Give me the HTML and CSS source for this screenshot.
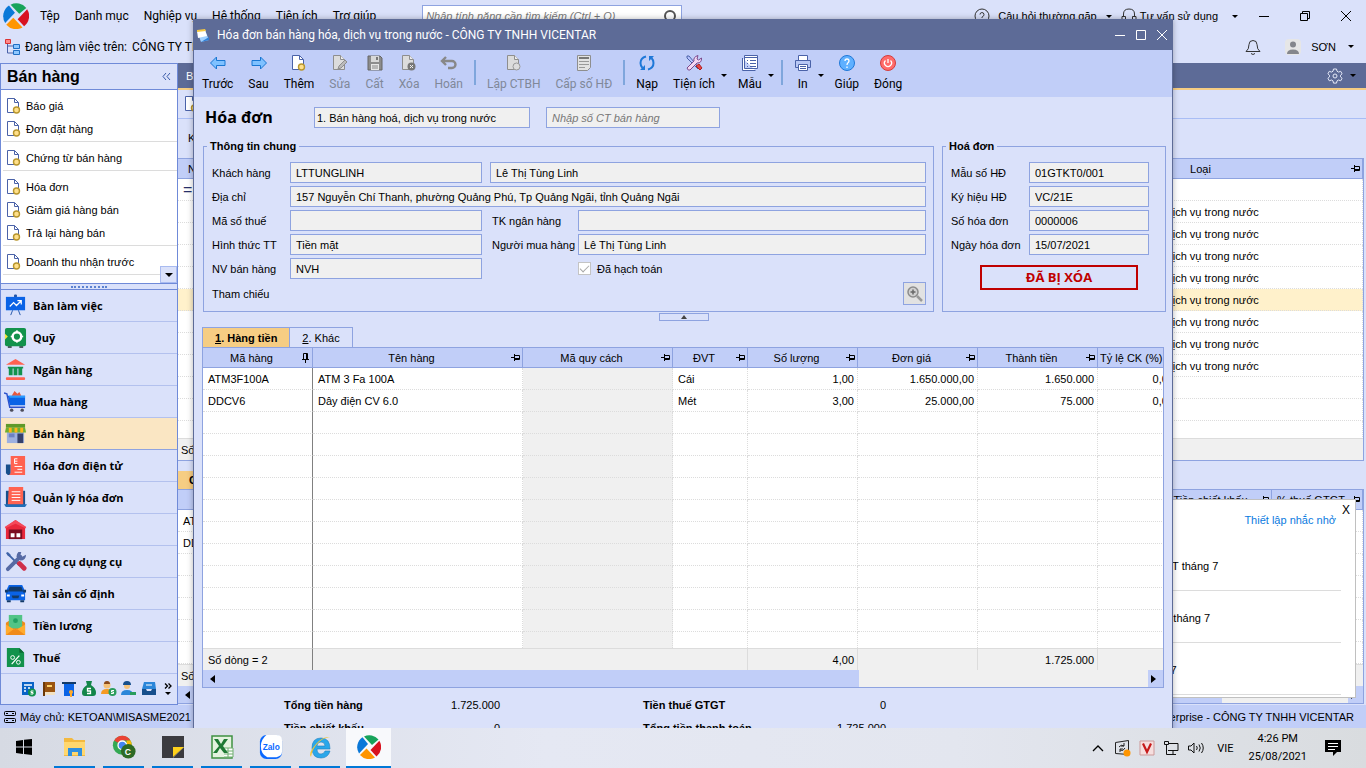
FILE: index.html
```
<!DOCTYPE html>
<html lang="vi">
<head>
    <meta charset="UTF-8">
    <meta name="viewport" content="width=device-width, initial-scale=1.0">
    <title>MISA SME - Bán hàng</title>
    <link rel="stylesheet" href="styles.css">
</head>
<body>

<!-- shared icons -->
<svg class="sprite" aria-hidden="true">
    <symbol id="i-doc" viewBox="0 0 16 18">
        <path d="M1.5 1.5h7l4 4v10h-11z" fill="#fff" stroke="#4a62a8"/>
        <path d="M8.500 1.500v4h4" fill="none" stroke="#4a62a8"/>
        <circle cx="10.500" cy="13" r="3" fill="#ffe08a" stroke="#b8962e" stroke-width="1.400"/>
    </symbol>
    <symbol id="i-doc-off" viewBox="0 0 16 18">
        <path d="M1.500 1.500h7l4 4v10h-11z" fill="#dcdcdc" stroke="#8e8e8e"/>
        <path d="M8.500 1.500v4h4" fill="#eee" stroke="#8e8e8e"/>
    </symbol>
    <symbol id="i-pin" viewBox="0 0 10 8">
        <path d="M0 4.500h3M3.500 1v7M3.500 2.500h5v4h-5M3.500 5.500h5" fill="none" stroke="#000"/>
    </symbol>
    <symbol id="i-pin-v" viewBox="0 0 8 10">
        <path d="M3.500 10V6M0 6.500h7M1.500 6V.5h4V6M4.500 1v5" fill="none" stroke="#000"/>
    </symbol>
    <symbol id="i-misa" viewBox="0 0 24 24">
        <path d="M7 1.500A12 12 0 0 1 21.500 4.500L15 10z" fill="#17a35b"/>
        <path d="M22.300 5.700A12 12 0 0 1 19.500 21.500L13.500 15z" fill="#d8121f"/>
        <path d="M18 22.500A12 12 0 0 1 3 20L9.500 13.500z" fill="#ff9500"/>
        <path d="M2 18.500A12 12 0 0 1 5.500 2.200L11 9z" fill="#0a78d8"/>
    </symbol>
    <symbol id="i-person" viewBox="0 0 16 16">
        <circle cx="6" cy="4" r="3.500" fill="#f5c27a"/><path d="M3 3a3 3 0 0 1 6 0z" fill="#8a4a1e"/>
        <path d="M0 13q0-5 6-5t6 5z" fill="#f59a23"/><circle cx="11.500" cy="11" r="4" fill="#2a9d5c"/>
        <path d="M13 9.500h-2.500v1.500h2v1.500h-2.500" fill="none" stroke="#fff"/>
    </symbol>
</svg>

<main class="app">
    <header class="titlebar">
        <svg class="logo" viewBox="0 0 24 24"><use href="#i-misa"/></svg>
        <nav class="menu">
            <a href="#">Tệp</a><a href="#">Danh mục</a><a href="#">Nghiệp vụ</a><a href="#">Hệ thống</a><a href="#">Tiện ích</a><a href="#">Trợ giúp</a>
        </nav>
        <div class="search">
            <input type="text" aria-label="Tìm kiếm" placeholder="Nhập tính năng cần tìm kiếm (Ctrl + Q)">
            <svg width="16" height="16" viewBox="0 0 16 16"><circle cx="8" cy="8" r="5" fill="none" stroke="#555" stroke-width="2"/><path d="M11 12l3 3" stroke="#555" stroke-width="2"/></svg>
        </div>
        <div class="help">
            <button type="button">
                <svg width="16" height="16" viewBox="0 0 16 16" fill="none" stroke="#333"><circle cx="8" cy="8" r="7"/><path d="M6 6.500a2 2 0 1 1 2.500 2q-.5.300-.5 1.500M8 11v1"/></svg>
                Câu hỏi thường gặp
            </button>
            <i class="caret"></i>
            <button type="button" class="support">
                <svg width="16" height="16" viewBox="0 0 16 16" fill="none" stroke="#333"><path d="M2.500 8V6q0-5 5.500-5t5.500 5v2M1 8.500h3.500v6H3a2 2 0 0 1-2-2zM11.500 8.500H15v4a2 2 0 0 1-2 2h-1.500z"/></svg>
                Tư vấn sử dụng
            </button>
            <i class="caret"></i>
        </div>
        <div class="winbtns">
            <button type="button" aria-label="Thu nhỏ"><svg width="12" height="12" viewBox="0 0 12 12"><path d="M1 6.500h10" stroke="#000"/></svg></button>
            <button type="button" aria-label="Khôi phục"><svg width="12" height="12" viewBox="0 0 12 12"><path d="M1.500 3.500h7v7h-7zM3.500 3V1.500h7v7H9" fill="none" stroke="#000"/></svg></button>
            <button type="button" aria-label="Đóng"><svg width="12" height="12" viewBox="0 0 12 12"><path d="M1 1l10 10M11 1L1 11" stroke="#000"/></svg></button>
        </div>
    </header>

    <div class="workbar">
        <svg width="18" height="18" viewBox="0 0 18 18"><path d="M3.500 4v11h6M3.500 8h6" fill="none" stroke="#4a62a8"/><path d="M1.500 1.500h5v4h-5z" fill="#ff8a8a" stroke="#d33"/><path d="M9.500 6.500h6v4h-6zM9.500 12.500h6v4h-6z" fill="#8fc8ff" stroke="#1f6fc4"/></svg>
        <span>Đang làm việc trên:</span>
        <span class="company">CÔNG TY TNHH VICENTAR</span>
        <div class="user">
            <svg class="bell" width="16" height="18" viewBox="0 0 16 18" fill="none" stroke="#333"><path d="M1 13.500q3-2 3-7a4 4 0 0 1 8 0q0 5 3 7zM6 15.500q2 2 4 0"/></svg>
            <svg class="avatar" width="16" height="16" viewBox="0 0 16 16"><rect width="16" height="16" rx="4" fill="#e6e6e6"/><circle cx="8" cy="5.500" r="3" fill="#84868c"/><path d="M2 15q0-4.500 6-4.500T14 15z" fill="#84868c"/></svg>
            <span>SƠN</span>
            <i class="caret"></i>
        </div>
    </div>

    <div class="workspace">
        <aside class="sidebar">
            <div class="side-head"><h2>Bán hàng</h2><button type="button" aria-label="Thu gọn"><svg width="9" height="9" viewBox="0 0 9 9"><path d="M4 1L1 4.500 4 8M8 1L5 4.500 8 8" fill="none" stroke="#3a5aa8"/></svg></button></div>
            <div class="side-list">
                <ul>
                    <li><svg><use href="#i-doc"/></svg><a href="#">Báo giá</a></li>
                    <li><svg><use href="#i-doc"/></svg><a href="#">Đơn đặt hàng</a></li>
                </ul>
                <ul>
                    <li><svg><use href="#i-doc"/></svg><a href="#">Chứng từ bán hàng</a></li>
                </ul>
                <ul>
                    <li><svg><use href="#i-doc"/></svg><a href="#">Hóa đơn</a></li>
                    <li><svg><use href="#i-doc"/></svg><a href="#">Giảm giá hàng bán</a></li>
                    <li><svg><use href="#i-doc"/></svg><a href="#">Trả lại hàng bán</a></li>
                </ul>
                <ul>
                    <li><svg><use href="#i-doc"/></svg><a href="#">Doanh thu nhận trước</a></li>
                </ul>
                <button type="button" class="scroll-down" aria-label="Cuộn xuống"><i class="caret"></i></button>
            </div>
            <div class="grip"></div>
            <nav class="modules">
                <a href="#"><svg viewBox="0 0 24 24"><path d="M11 1h2v3h-2zM9 17l-2 5M15 17l2 5" stroke="#2456a8" fill="#2456a8"/><rect x="2" y="3" width="20" height="14" fill="#0a63e6"/><path d="M6 13l4-4 3 3 5-5M14 7h4v4" fill="none" stroke="#fff" stroke-width="1.300"/></svg>Bàn làm việc</a>
                <a href="#"><svg viewBox="0 0 24 24"><path d="M4 20h4v3H4zM16 20h4v3h-4z" fill="#4b5a60"/><rect x="1" y="2" width="22" height="19" rx="2" fill="#12924c"/><circle cx="13.500" cy="11" r="4.500" fill="none" stroke="#fff" stroke-width="2.500"/><path d="M13.500 4.500v3M13.500 14.500v3M7 11h3M17 11h3" stroke="#fff" stroke-width="1.500"/><path d="M1 8l3 3-3 3z" fill="#f7e63c"/></svg>Quỹ</a>
                <a href="#"><svg viewBox="0 0 24 24"><path d="M12 1l10 6H2z" fill="#ff6250"/><path d="M4 9h16v2H4zM5 11h4v7H5zM10 11h4v7h-4zM15 11h4v7h-4z" fill="#12924c"/><rect x="2" y="20" width="20" height="3" rx="1" fill="#ff6250"/></svg>Ngân hàng</a>
                <a href="#"><svg viewBox="0 0 24 24"><path d="M8 6l3-5 3 3 2-2 2 4z" fill="#e8583e"/><path d="M4 6h18v10H6z" fill="#0a63e6"/><path d="M5 6h17v2H6z" fill="#2b9bff"/><path d="M0 3l3 1 3 14h16" fill="none" stroke="#2c52cc" stroke-width="1.500"/><circle cx="8" cy="21" r="1.800" fill="#4d4d5c"/><circle cx="19" cy="21" r="1.800" fill="#4d4d5c"/></svg>Mua hàng</a>
                <a href="#" class="active"><svg viewBox="0 0 24 24"><path d="M3 10h18v12H3z" fill="#9db0e0"/><path d="M14 12h6v10h-6z" fill="#34406b"/><path d="M5 12h6v4H5z" fill="#6c81c4"/><path d="M2 2h20v4H2z" fill="#5e9a2a"/><path d="M2 6h20l1 5H1z" fill="#6fae2f"/><path d="M5 6h3v5H5zM11 6h3v5h-3zM17 6h3v5h-3z" fill="#ffb31a"/></svg>Bán hàng</a>
                <a href="#"><svg viewBox="0 0 24 24"><path d="M2 11h5v11H4l-2-2z" fill="#174f8c"/><path d="M7 2h15v20H5q2-1 2-3z" fill="#ff6250"/><path d="M14 5h-3v5h3M11 7.500h3M11 13h8M14 16h5M11 19h8" fill="none" stroke="#fff"/></svg>Hóa đơn điện tử</a>
                <a href="#"><svg viewBox="0 0 24 24"><path d="M2 5h20v15H2z" fill="#174f8c"/><path d="M0 19h24l-2 3H2z" fill="#1f6db8"/><path d="M5 1h15v18H4z" fill="#ff6250"/><path d="M8 6h9M8 9h9M8 12h9M8 15h9" stroke="#fff"/></svg>Quản lý hóa đơn</a>
                <a href="#"><svg viewBox="0 0 24 24"><path d="M12 2l10 7v13H2V9z" fill="#e8283c"/><path d="M5 12h14v10H5z" fill="#7a0d20"/><path d="M7 16h4v4H7zM13 16h4v4h-4z" fill="#fff"/><path d="M1 9l11-7 11 7v2L12 6 1 11z" fill="#f4495a"/></svg>Kho</a>
                <a href="#"><svg viewBox="0 0 24 24"><path d="M4 4l12 12" stroke="#3e63a8" stroke-width="2"/><path d="M2 3l2-1 3 3-1 2-2-1z" fill="#3e63a8"/><path d="M16 14l5 5" stroke="#cf2f4a" stroke-width="5" stroke-linecap="round"/><path d="M4 20L17 7" stroke="#566aa5" stroke-width="4" stroke-linecap="round"/><path d="M15 2l3 0-1 4 2 1 4-2q0 6-6 6l-4-4q0-3 2-5z" fill="#566aa5"/></svg>Công cụ dụng cụ</a>
                <a href="#"><svg viewBox="0 0 24 24"><path d="M5 3h14l3 7v9H2v-9z" fill="#0a63e6"/><path d="M6 5h12l2 5H4z" fill="#123a68"/><path d="M1 8h3v3H1zM20 8h3v3h-3zM3 19h4v2H3zM17 19h4v2h-4z" fill="#123a68"/><path d="M8 14h8l-1 3H9z" fill="#123a68"/><path d="M3 13h3v2H3zM18 13h3v2h-3z" fill="#fff"/></svg>Tài sản cố định</a>
                <a href="#"><svg viewBox="0 0 24 24"><path d="M2 9l5-3h10l5 3v13H2z" fill="#f08a1a"/><path d="M5 1h14v14H5z" fill="#52c486"/><circle cx="12" cy="7" r="2.500" fill="#23a062"/><path d="M2 11l10 6 10-6v11H2z" fill="#ffab2e"/><path d="M2 22l8-6 2 1 2-1 8 6z" fill="#f08a1a"/></svg>Tiền lương</a>
                <a href="#"><svg viewBox="0 0 24 24"><path d="M3 2h13l5 5v15H3z" fill="#12924c"/><path d="M16 2l5 5h-5z" fill="#0a6a35"/><path d="M16 10l-8 9" stroke="#fff" stroke-width="1.300"/><circle cx="9" cy="12" r="2" fill="none" stroke="#fff"/><circle cx="15" cy="17" r="2" fill="none" stroke="#fff"/></svg>Thuế</a>
            </nav>
            <div class="shortcuts">
                <svg viewBox="0 0 16 16"><rect x="1" y="1" width="12" height="13" fill="#0a63c6"/><path d="M3 4h8M3 7h2M7 7h2M3 10h2" stroke="#fff" stroke-width="1.500"/><circle cx="11" cy="11.500" r="4" fill="#12924c"/><path d="M12.500 10H10v1.500h2V13H9.500" fill="none" stroke="#fff"/></svg>
                <svg viewBox="0 0 16 16"><path d="M3 1h11v13H3z" fill="#9a5412"/><path d="M3 11h11v3H3z" fill="#f3e2c4"/><path d="M6 4h5v2H6z" fill="#ffd36b"/><path d="M2 1h2v14H2z" fill="#6d3908"/></svg>
                <svg viewBox="0 0 16 16"><path d="M3 3h10v12H3z" fill="#0a63e6"/><path d="M1 1h14v2H1z" fill="#123a68"/><circle cx="10" cy="11" r="2" fill="#ffab2e"/><path d="M9 12h2v4H9z" fill="#ffab2e"/></svg>
                <svg viewBox="0 0 16 16"><path d="M5 0h6L10 4q5 3 5 8 0 3-3 3H4q-3 0-3-3 0-5 5-8z" fill="#12854a"/><path d="M10 7.500H6.500V10h3v2.500H6" fill="none" stroke="#fff" stroke-width="1.300"/></svg>
                <svg viewBox="0 0 16 16"><use href="#i-person"/></svg>
                <svg viewBox="0 0 16 16"><circle cx="6" cy="5" r="3" fill="#f5c27a"/><path d="M2 4q0-4 4-4t4 4z" fill="#174f8c"/><path d="M0 14q0-5 6-5t6 5z" fill="#2b86d9"/><path d="M9 11h6v3H9z" fill="#2a9d5c"/></svg>
                <svg viewBox="0 0 16 16"><path d="M3 1h11l1 7H1z" fill="#2b86d9"/><path d="M1 8h4l1 2h4l1-2h4v6H1z" fill="#174f8c"/><path d="M5 4h6" stroke="#fff"/></svg>
                <button type="button" class="more" aria-label="Thêm"><svg viewBox="0 0 8 6"><path d="M1 .5l2.500 2.500L1 5.500M4.500.5L7 3 4.500 5.500" fill="none" stroke="#000" stroke-width="1.300"/></svg><i class="caret"></i></button>
            </div>
        </aside>

        <section class="content">
            <div class="tabbar">
                <span>Bán hàng</span>
                <div class="gear">
                    <svg width="16" height="16" viewBox="0 0 16 16" fill="none" stroke="#e6eaf8"><path d="M6.500 1h3l.5 2.200 1.500.9 2.200-.8 1.400 2.500L13.500 7.300v1.500l1.600 1.500-1.400 2.500-2.200-.8-1.500.9-.5 2.200h-3L6 12.900 4.500 12l-2.200.8L.9 10.300l1.600-1.500V7.300L.9 5.800l1.400-2.500 2.200.8L6 3.200z"/><circle cx="8" cy="8" r="2"/></svg>
                    <i class="caret"></i>
                </div>
            </div>
            <div class="tools"><svg width="16" height="18"><use href="#i-doc"/></svg></div>
            <div class="filter">Kỳ</div>

            <div class="list">
                <div class="rows">
                    <table>
                        <colgroup><col><col class="c-type"></colgroup>
                        <thead><tr><th class="first">Ngày hạch toán</th><th class="type">Loại<svg class="pin"><use href="#i-pin"/></svg></th></tr></thead>
                        <tbody data-rows="24">
                            <tr><td class="equals">=</td><td></td></tr>
                            <tr><td></td><td class="type">Bán hàng hóa, dịch vụ trong nước</td></tr>
                            <tr><td></td><td class="type">Bán hàng hóa, dịch vụ trong nước</td></tr>
                            <tr><td></td><td class="type">Bán hàng hóa, dịch vụ trong nước</td></tr>
                            <tr><td></td><td class="type">Bán hàng hóa, dịch vụ trong nước</td></tr>
                            <tr class="selected"><td></td><td class="type">Bán hàng hóa, dịch vụ trong nước</td></tr>
                            <tr><td></td><td class="type">Bán hàng hóa, dịch vụ trong nước</td></tr>
                            <tr><td></td><td class="type">Bán hàng hóa, dịch vụ trong nước</td></tr>
                            <tr><td></td><td class="type">Bán hàng hóa, dịch vụ trong nước</td></tr>
                        </tbody>
                    </table>
                </div>
                <div class="list-foot">Số dòng</div>
            </div>

            <div class="detail-tabs"><span>Chi tiết</span></div>
            <div class="list detail">
                <div class="rows">
                    <table>
                        <colgroup><col><col class="c-disc"><col class="c-vat"></colgroup>
                        <thead><tr><th></th><th>Tiền chiết khấu<svg class="pin"><use href="#i-pin"/></svg></th><th>% thuế GTGT<svg class="pin"><use href="#i-pin"/></svg></th></tr></thead>
                        <tbody data-rows="8">
                            <tr><td>ATM3F100A</td><td></td><td></td></tr>
                            <tr><td>DDCV6</td><td></td><td></td></tr>
                        </tbody>
                    </table>
                </div>
                <div class="list-foot">Số dòng</div>
                <div class="hscroll"><i class="left"></i><div class="thumb"></div><div class="rest"></div><i class="right"></i></div>
            </div>
        </section>
    </div>

    <footer class="status">
        <svg width="12" height="12" viewBox="0 0 12 12" fill="none" stroke="#000"><rect x=".5" y=".5" width="11" height="4" rx="1"/><rect x=".5" y="7.500" width="11" height="4" rx="1"/><path d="M2 2.500h2M2 9.500h2M8 2.500h2M8 9.500h2"/></svg>
        <span>Máy chủ: KETOAN\MISASME2021</span>
        <span class="edition">MISA SME.NET 2021 Enterprise - CÔNG TY TNHH VICENTAR</span>
    </footer>

    <!-- reminder popup, partly under the invoice window -->
    <aside class="reminder">
        <button type="button" aria-label="Đóng nhắc nhở">X</button>
        <a href="#">Thiết lập nhắc nhở</a>
        <p>Nộp tờ khai thuế GTGT tháng 7</p>
        <p>Nộp báo cáo hóa đơn tháng 7</p>
        <p>Trích khấu hao tháng 7</p>
    </aside>

    <section class="dialog">
        <header class="dlg-title">
            <svg width="14" height="15" viewBox="0 0 14 15"><path d="M1 3l8-1 4 10-8 2z" fill="#9fd0ff"/><path d="M1 3l8-1 2 6-9 2z" fill="#fff"/><path d="M1 2l8-1 1 2-9 1z" fill="#f5c842"/><path d="M5 14l8-2v-3z" fill="#2f7fd8"/></svg>
            <h1>Hóa đơn bán hàng hóa, dịch vụ trong nước - CÔNG TY TNHH VICENTAR</h1>
            <button type="button" aria-label="Thu nhỏ"><svg width="12" height="12" viewBox="0 0 12 12"><path d="M1 6.500h10" stroke="#fff"/></svg></button>
            <button type="button" aria-label="Phóng to"><svg width="12" height="12" viewBox="0 0 12 12"><path d="M1.500 1.500h9v9h-9z" fill="none" stroke="#fff"/></svg></button>
            <button type="button" aria-label="Đóng"><svg width="12" height="12" viewBox="0 0 12 12"><path d="M1 1l10 10M11 1L1 11" stroke="#fff"/></svg></button>
        </header>

        <div class="toolbar">
            <button type="button"><svg viewBox="0 0 18 18"><path d="M1.500 9l6-6v3.500h8.500v5H7.500V15z" fill="#7fc1ff" stroke="#1976d2"/></svg>Trước</button>
            <button type="button"><svg viewBox="0 0 18 18"><path d="M16.500 9l-6-6v3.500H2v5h8.500V15z" fill="#7fc1ff" stroke="#1976d2"/></svg>Sau</button>
            <button type="button"><svg viewBox="0 0 16 18"><use href="#i-doc"/></svg>Thêm</button>
            <button type="button" disabled><svg viewBox="0 0 16 18"><use href="#i-doc-off"/><path d="M6 15l1-3 6-6 2 2-6 6z" fill="#bbb" stroke="#8e8e8e"/></svg>Sửa</button>
            <button type="button" disabled><svg viewBox="0 0 18 18"><path d="M2 2h12l2 2v12H2z" fill="#8c8c8c" stroke="#666"/><path d="M5 2h8v6H5z" fill="#d8d8d8"/><path d="M10 3h2v3h-2z" fill="#777"/><path d="M5 10h8v6H5z" fill="#e6e6e6"/><path d="M6 12h6M6 14h6" stroke="#888"/></svg>Cất</button>
            <button type="button" disabled><svg viewBox="0 0 16 18"><use href="#i-doc-off"/><circle cx="10.500" cy="12.500" r="4" fill="#777"/><path d="M9 11l3 3M12 11l-3 3" stroke="#eee"/></svg>Xóa</button>
            <button type="button" disabled><svg viewBox="0 0 18 18"><path d="M6 3L2 7l4 4M2.500 7H12a3.500 3.500 0 0 1 0 7H8" fill="none" stroke="#888" stroke-width="2.400"/></svg>Hoãn</button>
            <i class="sep"></i>
            <button type="button" disabled><svg viewBox="0 0 16 18"><use href="#i-doc-off"/><circle cx="10.500" cy="12.500" r="3.500" fill="#ddd" stroke="#999"/></svg>Lập CTBH</button>
            <button type="button" disabled><svg viewBox="0 0 18 18"><path d="M2.500 1.500h13v12l-3 3h-10z" fill="#e2e2e2" stroke="#8e8e8e"/><path d="M4 4h10" stroke="#777" stroke-width="2"/><path d="M4 7.500h10M4 10.500h10M4 13.500h6" stroke="#999"/></svg>Cấp số HĐ</button>
            <i class="sep"></i>
            <button type="button"><svg viewBox="0 0 18 18"><path d="M8 2.500Q2.500 4 2.500 9q0 3 2 5M10 15.500q5.500-1.500 5.500-6.500 0-3-2-5" fill="none" stroke="#1f78d8" stroke-width="2"/><path d="M7 11v5H2zM11 7V2h5z" fill="#1f78d8"/></svg>Nạp</button>
            <button type="button"><svg viewBox="0 0 18 18"><path d="M2 2l2 0 10 12-1 1L2 4z" fill="#b9c4ff" stroke="#4a62a8"/><path d="M11 12l3-2 3 4-2 2z" fill="#e64545" stroke="#b02020"/><path d="M2 14L9 7q-1-4 4-5.500L12 5l1.500 1 3-2q.5 5-4.500 5L5 16q-2 1-3-2z" fill="#f2d7f2" stroke="#7a4a8c"/></svg>Tiện ích</button>
            <i class="caret"></i>
            <button type="button"><svg viewBox="0 0 18 18"><path d="M1.500 4v12.500h13M3.500 1.500h13v13h-13z" fill="#fff" stroke="#4a62a8"/><path d="M3 3.500h14" stroke="#4a62a8"/><path d="M6 6.500h1M9 6.500h6M6 9.500h1M9 9.500h6M6 12.500h1M9 12.500h6" stroke="#4a62a8"/></svg>Mẫu</button>
            <i class="caret"></i>
            <i class="sep"></i>
            <button type="button"><svg viewBox="0 0 18 18"><path d="M4.500 1.500h9v5h-9z" fill="#fff" stroke="#4a62a8"/><path d="M1.500 6.500h15v7h-15z" fill="#b9c8f5" stroke="#4a62a8"/><path d="M4.500 10.500h9v6h-9z" fill="#fff" stroke="#4a62a8"/><path d="M6 12.500h6M6 14.500h6" stroke="#4a62a8"/></svg>In</button>
            <i class="caret"></i>
            <button type="button"><svg viewBox="0 0 18 18"><circle cx="9" cy="9" r="7.500" fill="#5fb0ff" stroke="#1f78d8"/><path d="M7 7q0-2 2-2t2 2q0 1-1 1.700T9 11M9 12.500V14" fill="none" stroke="#fff" stroke-width="1.300"/></svg>Giúp</button>
            <button type="button"><svg viewBox="0 0 18 18"><circle cx="9" cy="9" r="7.500" fill="#ff6b6b" stroke="#d43c3c"/><path d="M6.500 6.500a3.500 3.500 0 1 0 5 0M9 5v4" fill="none" stroke="#fff" stroke-width="1.300"/></svg>Đóng</button>
        </div>

        <div class="dlg-body">
            <div class="doc-head">
                <h2>Hóa đơn</h2>
                <input type="text" class="field kind" aria-label="Loại chứng từ" value="1. Bán hàng hoá, dịch vụ trong nước" readonly>
                <input type="text" class="field voucher" aria-label="Số chứng từ bán hàng" placeholder="Nhập số CT bán hàng" readonly>
            </div>

            <div class="boxes">
                <fieldset class="general">
                    <legend>Thông tin chung</legend>
                    <label for="kh">Khách hàng</label>
                    <input type="text" id="kh" class="field" value="LTTUNGLINH" readonly>
                    <input type="text" class="field wide2" aria-label="Tên khách hàng" value="Lê Thị Tùng Linh" readonly>
                    <label for="dc">Địa chỉ</label>
                    <input type="text" id="dc" class="field wide3" value="157 Nguyễn Chí Thanh, phường Quảng Phú, Tp Quảng Ngãi, tỉnh Quảng Ngãi" readonly>
                    <label for="mst">Mã số thuế</label>
                    <input type="text" id="mst" class="field" readonly>
                    <label for="tk" class="mid">TK ngân hàng</label>
                    <input type="text" id="tk" class="field" readonly>
                    <label for="tt">Hình thức TT</label>
                    <input type="text" id="tt" class="field" value="Tiền mặt" readonly>
                    <label for="nm" class="mid">Người mua hàng</label>
                    <input type="text" id="nm" class="field" value="Lê Thị Tùng Linh" readonly>
                    <label for="nv">NV bán hàng</label>
                    <input type="text" id="nv" class="field" value="NVH" readonly>
                    <label class="check"><input type="checkbox" checked disabled>Đã hạch toán</label>
                    <span class="ref">Tham chiếu</span>
                    <button type="button" class="zoom" aria-label="Chọn tham chiếu"><svg width="19" height="19" viewBox="0 0 19 19"><circle cx="8" cy="8" r="5" fill="#d0d0d0" stroke="#8c8c8c" stroke-width="1.500"/><path d="M8 5.500v5M5.500 8h5" stroke="#666" stroke-width="1.500"/><path d="M12 12l5 5" stroke="#999" stroke-width="2.500"/></svg></button>
                </fieldset>

                <fieldset class="invoice">
                    <legend>Hoá đơn</legend>
                    <label for="mau">Mẫu số HĐ</label><input type="text" id="mau" class="field" value="01GTKT0/001" readonly>
                    <label for="kyhieu">Ký hiệu HĐ</label><input type="text" id="kyhieu" class="field" value="VC/21E" readonly>
                    <label for="so">Số hóa đơn</label><input type="text" id="so" class="field" value="0000006" readonly>
                    <label for="ngay">Ngày hóa đơn</label><input type="text" id="ngay" class="field" value="15/07/2021" readonly>
                    <div class="stamp">ĐÃ BỊ XÓA</div>
                </fieldset>
            </div>

            <button type="button" class="collapse" aria-label="Thu gọn"></button>

            <div class="tabs">
                <button type="button" class="on"><u>1</u>. Hàng tiền</button>
                <button type="button"><u>2</u>. Khác</button>
            </div>

            <div class="grid">
                <div class="rows">
                    <table>
                        <colgroup><col class="w110"><col class="w210"><col class="w150"><col class="w75"><col class="w110"><col class="w120"><col class="w120"><col></colgroup>
                        <thead>
                            <tr>
                                <th>Mã hàng<svg class="pin up"><use href="#i-pin-v"/></svg></th>
                                <th>Tên hàng<svg class="pin"><use href="#i-pin"/></svg></th>
                                <th>Mã quy cách<svg class="pin"><use href="#i-pin"/></svg></th>
                                <th>ĐVT<svg class="pin"><use href="#i-pin"/></svg></th>
                                <th>Số lượng<svg class="pin"><use href="#i-pin"/></svg></th>
                                <th>Đơn giá<svg class="pin"><use href="#i-pin"/></svg></th>
                                <th>Thành tiền<svg class="pin"><use href="#i-pin"/></svg></th>
                                <th class="tight">Tỷ lệ CK (%)</th>
                            </tr>
                        </thead>
                        <tbody data-rows="30">
                            <tr><td>ATM3F100A</td><td>ATM 3 Fa 100A</td><td></td><td>Cái</td><td class="num">1,00</td><td class="num">1.650.000,00</td><td class="num">1.650.000</td><td class="num">0,00</td></tr>
                            <tr><td>DDCV6</td><td>Dây điện CV 6.0</td><td></td><td>Mét</td><td class="num">3,00</td><td class="num">25.000,00</td><td class="num">75.000</td><td class="num">0,00</td></tr>
                        </tbody>
                    </table>
                </div>
                <table class="sum">
                    <colgroup><col class="w110"><col class="w210"><col class="w150"><col class="w75"><col class="w110"><col class="w120"><col class="w120"><col></colgroup>
                    <tbody><tr><td>Số dòng = 2</td><td colspan="3"></td><td class="num">4,00</td><td></td><td class="num">1.725.000</td><td></td></tr></tbody>
                </table>
                <div class="hscroll"><i class="left"></i><div class="thumb"></div><div class="rest"></div><i class="right"></i></div>
            </div>

            <div class="totals">
                <b>Tổng tiền hàng</b><span>1.725.000</span><b class="second">Tiền thuế GTGT</b><span>0</span>
                <b>Tiền chiết khấu</b><span>0</span><b class="second">Tổng tiền thanh toán</b><span>1.725.000</span>
            </div>
        </div>
    </section>
</main>

<footer class="taskbar">
    <button type="button" aria-label="Start"><svg viewBox="0 0 24 24"><path d="M4 6l7-1v6.500H4zM12 4.800L20 4v7.500h-8zM4 12.500h7V19l-7-1zM12 12.500h8V20l-8-1z" fill="#000"/></svg></button>
    <button type="button" class="run" aria-label="File Explorer"><svg viewBox="0 0 24 24"><path d="M1 3h8l2 2h11v16H1z" fill="#f3b93f"/><path d="M1 7h21v13H1z" fill="#ffd76e"/><path d="M5 13h14v8h-4v-4H9v4H5z" fill="#2f8fe0"/></svg></button>
    <button type="button" class="run" aria-label="Chrome"><svg viewBox="0 0 28 28"><circle cx="12" cy="12" r="11" fill="#34a853"/><path d="M12 1a11 11 0 0 1 9.500 5.500H12L7 9 2.500 6.500A11 11 0 0 1 12 1z" fill="#ea4335"/><path d="M21.500 6.500A11 11 0 0 1 12 23l5-9V6.500z" fill="#fbbc05"/><circle cx="12" cy="12" r="5" fill="#4285f4" stroke="#fff" stroke-width="1.500"/><circle cx="19" cy="19" r="8.500" fill="#2d6a25"/><text x="15" y="23" class="glyph c">C</text></svg></button>
    <button type="button" class="run" aria-label="Sticky Notes"><svg viewBox="0 0 24 24"><path d="M1 1h22v11L12 23H1z" fill="#3b3b3f"/><path d="M23 12v11H12z" fill="#3b3b3f"/><path d="M12 12h11L12 22z" fill="#ffd21c"/></svg></button>
    <button type="button" class="run" aria-label="Excel"><svg viewBox="0 0 24 24"><path d="M2 1h20v22H2z" fill="#e4f3df" stroke="#3f9142" stroke-width="1.500"/><path d="M14 13h9v9h-9M14 16h9M14 19h9M18 13v9" fill="#fff" stroke="#6fae6f"/><path d="M4 4h4l3 5 3-5h4l-5 7 5 7h-4l-4-5-3 5H3l6-7z" fill="#1f7a34"/></svg></button>
    <button type="button" class="run" aria-label="Zalo"><svg viewBox="0 0 26 26"><rect x="1" y="0" width="24" height="26" rx="7" fill="#0a68ff"/><path d="M8 0h11q6 0 6 6v12q0 5-6 6H9q-7-3-7-12Q2 5 8 0z" fill="#fff"/><text x="4" y="16" class="glyph z">Zalo</text></svg></button>
    <button type="button" class="run" aria-label="Internet Explorer"><svg viewBox="0 0 24 24"><path d="M22 16q-2 7-9 7-9 0-9-10t9-10q9 0 9 11H9q0 5 4 5 3 0 4-3zM9 11h8q0-4-4-4t-4 4z" fill="#2aa7ea" stroke="#1b7fc0" stroke-width=".6"/><path d="M3 22Q0 18 8 9T22 3q-6-1-12 5T3 22z" fill="#f7c52d"/></svg></button>
    <button type="button" class="run active" aria-label="MISA SME"><svg viewBox="0 0 24 24"><use href="#i-misa"/></svg></button>
    <div class="tray">
        <svg width="14" height="10" viewBox="0 0 14 10"><path d="M2 8l5-5 5 5" fill="none" stroke="#000" stroke-width="1.300"/></svg>
        <svg width="18" height="18" viewBox="0 0 18 18"><path d="M2.500 3.500l13-2v14l-13-1z" fill="none" stroke="#222"/><path d="M6 8q2-3 5-1M12 9q-2 4-5 2M11 4v3H8M7 13v-3h3" fill="none" stroke="#222"/><circle cx="14" cy="14" r="3.500" fill="#ff9500"/></svg>
        <svg width="16" height="16" viewBox="0 0 16 16"><path d="M1 1h14v14H1z" fill="#f6dede" stroke="#c99"/><path d="M4 3.500l4 8.500 4-8.500" fill="none" stroke="#c61a1a" stroke-width="2.200"/></svg>
        <svg width="16" height="16" viewBox="0 0 16 16"><path d="M5 3.500h10v7H5M10 11v3M7 14.500h6M1.500 1.500h4v3h-4zM3.500 5v9.500h4" fill="none" stroke="#111"/></svg>
        <svg width="17" height="16" viewBox="0 0 17 16"><path d="M1.500 6v4H4l3 3V3L4 6zM9.500 6q1.500 2 0 4M12 4.500q2.500 3.500 0 7M14.500 3q3.500 5 0 10" fill="none" stroke="#111"/></svg>
        <span class="lang">VIE</span>
        <time>4:26 PM<br>25/08/2021</time>
        <svg class="note" width="16" height="18" viewBox="0 0 16 18"><path d="M0 1h16v12h-4l-4 4v-4H0z" fill="#000"/><path d="M3 4.500h10M3 7.500h10M3 10.500h7" stroke="#fff"/></svg>
    </div>
</footer>

<script>
// pad each table with blank rows so the dotted lines reach its footer
document.querySelectorAll('tbody[data-rows]').forEach(body => {
    const cols = body.rows[0].cells.length;
    while (body.rows.length < Number(body.dataset.rows)) {
        const row = body.insertRow();
        for (let i = 0; i < cols; i++) row.insertCell();
    }
});
</script>
</body>
</html>
```
FILE: styles.css
```
* {
    box-sizing: border-box;
}

body {
    margin: 0;
    height: 100vh;
    display: flex;
    flex-direction: column;
    overflow: hidden;
    font-family: "Liberation Sans", Arial, sans-serif;
    font-size: 11px;
    color: #000;
    background: #dae1fa;
}

button, input {
    font: inherit;
    color: inherit;
}

button {
    border: 0;
    padding: 0;
    background: none;
}

a {
    color: inherit;
    text-decoration: none;
}

h1, h2, p, ul, fieldset {
    margin: 0;
    padding: 0;
}

svg {
    flex: none;
    display: block;
}

.sprite {
    position: absolute;
    width: 0;
    height: 0;
}

.caret {
    display: block;
    flex: none;
    width: 0;
    height: 0;
    border: 3px solid transparent;
    border-top-color: #000;
    border-bottom: 0;
}

/* main window */
.app {
    position: relative;
    flex: 1;
    min-height: 0;
    display: flex;
    flex-direction: column;
    overflow: hidden;
}

.titlebar {
    height: 32px;
    display: flex;
    align-items: center;
    padding: 0 14px 0 3px;
}

.logo {
    width: 26px;
    height: 26px;
}

.menu {
    display: flex;
    gap: 15px;
    margin-left: 11px;
    font-family: Roboto, sans-serif;
    font-size: 12px;
}

.search {
    width: 260px;
    height: 22px;
    margin-left: 46px;
    align-self: flex-end;
    margin-bottom: 5px;
    display: flex;
    align-items: center;
    padding-right: 3px;
    background: #fff;
    border: 1px solid #8ea3e0;
}

.search input {
    flex: 1;
    min-width: 0;
    border: 0;
    padding: 0 3px;
    outline: 0;
    background: none;
}

input::placeholder {
    color: #777;
    font-style: italic;
    opacity: 1;
}

.help {
    margin-left: auto;
    display: flex;
    align-items: center;
    gap: 9px;
}

.help button {
    display: flex;
    align-items: center;
    gap: 8px;
}

.help .support {
    gap: 3px;
}

.help .caret:last-child {
    margin-left: 5px;
}

.winbtns {
    display: flex;
    gap: 29px;
    margin-left: 20px;
}

.workbar {
    height: 31px;
    display: flex;
    align-items: center;
    padding: 0 12px 2px 4px;
    font-family: Roboto, sans-serif;
    font-size: 12px;
}

.workbar span:first-of-type {
    margin-left: 3px;
}

.workbar .company {
    margin-left: 5px;
}

.user {
    margin-left: auto;
    display: flex;
    align-items: center;
    font-family: "Liberation Sans", sans-serif;
    font-size: 11px;
}

.avatar {
    margin-left: 24px;
}

.workbar .user span {
    margin: 0 12px 0 10px;
}

.workspace {
    flex: 1;
    min-height: 0;
    display: flex;
}

/* left navigation */
.sidebar {
    width: 178px;
    flex: none;
    display: flex;
    flex-direction: column;
    border: 1px solid #6f8ad8;
}

.side-head {
    height: 26px;
    display: flex;
    align-items: center;
    justify-content: space-between;
    padding: 0 6px;
    border-bottom: 1px solid #6f8ad8;
}

.side-head h2 {
    font-size: 16px;
    line-height: 24px;
}

.side-list {
    position: relative;
    flex: 1;
    min-height: 0;
    overflow: hidden;
    background: #fff;
}

.side-list ul {
    margin-left: 2px;
    padding: 4px 0 1px 3px;
    border-bottom: 1px solid #dcdcdc;
    list-style: none;
}

.side-list li {
    height: 23px;
    display: flex;
    align-items: center;
    gap: 4px;
}

.side-list li svg {
    width: 16px;
    height: 18px;
}

.scroll-down {
    position: absolute;
    right: 0;
    bottom: 0;
    width: 17px;
    height: 17px;
    display: flex;
    align-items: center;
    justify-content: center;
    background: #dae1fa;
    border: 1px solid #a9bbf0;
}

.scroll-down .caret {
    border-width: 4px 4px 0;
}

.grip {
    height: 7px;
    display: flex;
    align-items: center;
    justify-content: center;
    border: solid #6f8ad8;
    border-width: 1px 0;
}

.grip::before {
    content: "";
    width: 36px;
    border-top: 2px dotted #5b82d0;
}

.modules a {
    height: 32px;
    display: flex;
    align-items: center;
    gap: 6px;
    padding-left: 3px;
    border-bottom: 1px solid #b3c1ee;
    font-family: "Open Sans", sans-serif;
    font-weight: bold;
}

.modules a.active {
    background: #fae6c3;
    border-color: #8ea3e0;
}

.modules svg {
    width: 23px;
    height: 23px;
}

.shortcuts {
    height: 30px;
    display: flex;
    align-items: center;
    gap: 4px;
    padding-left: 20px;
}

.shortcuts svg {
    width: 16px;
    height: 16px;
}

.more {
    width: 14px;
    display: flex;
    flex-direction: column;
    align-items: center;
    gap: 3px;
}

.shortcuts .more svg {
    width: 8px;
    height: 6px;
}

/* document list behind the invoice window */
.content {
    flex: 1;
    min-width: 0;
    display: flex;
    flex-direction: column;
}

.tabbar {
    height: 27px;
    display: flex;
    align-items: center;
    justify-content: space-between;
    padding: 0 10px 0 8px;
    color: #fff;
    background: #5d6b97;
    border-bottom: 2px solid #f6cd83;
}

.gear {
    display: flex;
    align-items: center;
    gap: 7px;
}

.tools {
    height: 29px;
    padding: 5px 6px;
    border-bottom: 1px solid #a9bdf5;
}

.filter {
    height: 39px;
    padding: 0 10px;
    line-height: 38px;
}

.list {
    flex: 1;
    min-height: 0;
    display: flex;
    flex-direction: column;
    margin-right: 2px;
    overflow: hidden;
    background: #fff;
    border: 1px solid #8ea3e0;
    border-left-width: 0;
}

.list.detail {
    flex: none;
    height: 215px;
    margin-bottom: 1px;
}

.rows {
    flex: 1;
    min-height: 0;
    overflow: hidden;
}

table {
    width: 100%;
    table-layout: fixed;
    border-collapse: separate;
    border-spacing: 0;
}

th {
    position: relative;
    height: 20px;
    padding: 0 16px 0 4px;
    font-weight: normal;
    background: #c1cef8;
    border-right: 1px solid #8ea3e0;
    border-bottom: 1px solid #8ea3e0;
}

th.first {
    text-align: left;
    padding-left: 10px;
}

th.tight {
    padding: 0 0 0 2px;
    text-align: left;
    white-space: nowrap;
}

.pin {
    position: absolute;
    right: 1px;
    top: 5px;
    width: 10px;
    height: 8px;
}

.pin.up {
    width: 8px;
    height: 10px;
    right: 2px;
}

td {
    height: 22px;
    padding: 0 5px;
    white-space: nowrap;
    border-right: 1px dotted #dcdcdc;
    border-bottom: 1px dotted #dcdcdc;
}

.num {
    padding: 0 3px;
    text-align: right;
}

.c-type {
    width: 312px;
}

.c-disc {
    width: 110px;
}

.c-vat {
    width: 91px;
}

td.type {
    padding-left: 41px;
}

td.equals {
    font-size: 16px;
    line-height: 16px;
    color: #28306a;
}

.selected td {
    background: #fff1cb;
}

.list-foot {
    flex: none;
    height: 22px;
    padding: 0 3px;
    line-height: 22px;
    background: #f0f0f0;
    border-top: 1px solid #dcdcdc;
}

.detail-tabs {
    height: 28px;
    padding-top: 10px;
}

.detail-tabs span {
    display: inline-block;
    width: 70px;
    height: 18px;
    padding-left: 11px;
    line-height: 18px;
    font-weight: bold;
    background: #f6cd83;
}

.hscroll {
    flex: none;
    height: 17px;
    display: flex;
    align-items: center;
    background: #c1cef8;
}

.hscroll i {
    width: 0;
    margin: 0 3px;
    border: 4px solid transparent;
}

.hscroll .left {
    border-right: 5px solid #000;
}

.hscroll .right {
    border-left: 5px solid #000;
}

.thumb {
    flex: 640;
}

.rest {
    flex: 289;
    align-self: stretch;
    background: #f0f0f0;
}

.detail .thumb {
    flex: 1027;
}

.detail .rest {
    flex: 126;
}

.status {
    height: 23px;
    display: flex;
    align-items: center;
    gap: 4px;
    padding: 0 12px 0 4px;
    background: #c1cef8;
}

.edition {
    margin-left: auto;
}

.reminder {
    position: absolute;
    right: 10px;
    bottom: 30px;
    width: 300px;
    height: 199px;
    padding: 12px 14px 0 7px;
    background: #fff;
    border: 1px solid #c0c0c0;
}

.reminder a {
    display: block;
    height: 27px;
    padding-right: 5px;
    text-align: right;
    line-height: 16px;
    color: #0a7ae0;
}

.reminder button {
    position: absolute;
    right: 5px;
    top: 3px;
    font-size: 12px;
}

.reminder p {
    height: 52px;
    line-height: 54px;
    border-bottom: 1px solid #dcdcdc;
}

/* invoice window */
.dialog {
    position: absolute;
    top: 19px;
    left: 193px;
    right: 193px;
    bottom: -13px;
    display: flex;
    flex-direction: column;
    background: #dae1fa;
    border: 1px solid #5d6b97;
    box-shadow: 0 0 6px rgba(0, 0, 0, 0.3);
}

.dlg-title {
    height: 30px;
    display: flex;
    align-items: center;
    gap: 9px;
    padding: 0 4px 0 2px;
    color: #fff;
    background: #5d6b97;
}

.dlg-title h1 {
    flex: 1;
    margin-left: -2px;
    font-family: Roboto, sans-serif;
    font-size: 12px;
    font-weight: normal;
}

.toolbar {
    height: 47px;
    display: flex;
    align-items: center;
    gap: 15px;
    padding: 0 0 2px 8px;
    background: #c1cef8;
    font-family: Roboto, sans-serif;
    font-size: 12px;
}

.toolbar button {
    display: flex;
    flex-direction: column;
    align-items: center;
    gap: 4px;
    line-height: 16px;
    white-space: nowrap;
}

.toolbar button:disabled {
    color: #808899;
}

.toolbar svg {
    width: 18px;
    height: 18px;
}

.toolbar .sep {
    width: 2px;
    height: 25px;
    margin: 0 -4px;
    background: #7fa6dc;
}

.toolbar .caret {
    margin: 6px -4px 0 -9px;
}

.dlg-body {
    flex: 1;
    min-height: 0;
    display: flex;
    flex-direction: column;
    padding: 0 6px 0 8px;
}

.doc-head {
    display: flex;
    align-items: center;
    padding: 10px 0 0 3px;
}

.doc-head h2 {
    flex: none;
    width: 109px;
    font-family: "Open Sans", sans-serif;
    font-size: 16px;
    line-height: 21px;
    white-space: nowrap;
}

.field {
    width: 100%;
    min-width: 0;
    height: 21px;
    padding: 0 5px;
    border: 1px solid #8ea3e0;
    border-radius: 0;
    outline: 0;
    background: #f0f0f0;
}

.field.kind {
    width: 216px;
    padding: 0 2px;
}

.field.voucher {
    width: 174px;
    margin-left: 16px;
}

.boxes {
    display: flex;
    gap: 8px;
    margin-left: 1px;
    padding-top: 12px;
}

fieldset {
    display: grid;
    align-items: center;
    align-content: start;
    gap: 3px 8px;
    min-width: 0;
    border: 1px solid #8ea3e0;
}

legend {
    margin-left: -5px;
    padding: 0 3px;
    height: 13px;
    line-height: 13px;
    font-weight: bold;
}

.general {
    flex: 1;
    grid-template-columns: 70px 192px 80px 1fr;
    padding: 9px 7px 6px 8px;
}

.wide2 {
    grid-column: span 2;
}

.wide3 {
    grid-column: span 3;
}

.mid {
    padding-left: 2px;
    white-space: nowrap;
}

.check {
    grid-column: 4;
    display: flex;
    align-items: center;
    gap: 6px;
}

.check input {
    appearance: none;
    width: 13px;
    height: 13px;
    margin: 0;
    background: #fff;
    border: 1px solid #c4c4c4;
}

.check input:checked::before {
    content: "";
    display: block;
    width: 8px;
    height: 4px;
    margin: 2px 1px;
    border: solid #a8a8a8;
    border-width: 0 0 1px 1px;
    transform: rotate(-45deg);
}

.ref {
    grid-column: 1 / 4;
}

.zoom {
    justify-self: end;
    width: 23px;
    height: 23px;
    padding: 1px;
    background: #e2e2e2;
    border: 1px solid #8ea3e0;
}

.invoice {
    width: 224px;
    grid-template-columns: 70px 120px;
    padding: 9px 8px;
}

.stamp {
    grid-column: 1 / 3;
    justify-self: center;
    width: 158px;
    height: 25px;
    margin: 7px 0 0 18px;
    border: 2px solid #c00000;
    color: #c00000;
    font-family: "Open Sans", sans-serif;
    font-size: 13px;
    font-weight: bold;
    line-height: 21px;
    text-align: center;
}

.collapse {
    flex: none;
    align-self: center;
    width: 50px;
    height: 8px;
    margin-top: 1px;
    border: 1px solid #8ea3e0;
}

.collapse::before {
    content: "";
    display: block;
    width: 0;
    margin: 1px auto;
    border: 3px solid transparent;
    border-bottom: 4px solid #444;
    border-top: 0;
}

.tabs {
    display: flex;
    margin-top: 6px;
}

.tabs button {
    height: 20px;
    padding: 0 12px;
    border: 1px solid #8ea3e0;
    border-bottom: 0;
}

.tabs button + button {
    border-left: 0;
}

.tabs .on {
    font-weight: bold;
    background: #f6cd83;
}

.grid {
    flex: 1;
    min-height: 0;
    display: flex;
    flex-direction: column;
    margin-right: 2px;
    overflow: hidden;
    border: 1px solid #8ea3e0;
    background: #fff;
}

.grid table {
    width: 975px;
}

.grid td:first-child {
    border-right: 1px solid #808080;
}

.grid .rows td:nth-child(3) {
    background: #f0f0f0;
}

.sum td {
    background: #f0f0f0;
    border-top: 1px solid #dcdcdc;
    border-right: 1px solid #dcdcdc;
    border-bottom: 0;
}

.w75 {
    width: 75px;
}

.w110 {
    width: 110px;
}

.w120 {
    width: 120px;
}

.w150 {
    width: 150px;
}

.w210 {
    width: 210px;
}

.totals {
    display: grid;
    grid-template-columns: 120px 96px 263px 123px;
    padding: 6px 0 0 82px;
    line-height: 23px;
}

.totals b {
    white-space: nowrap;
}

.totals span {
    text-align: right;
}

.totals .second {
    padding-left: 143px;
}

/* windows taskbar */
.taskbar {
    height: 40px;
    flex: none;
    display: flex;
    background: linear-gradient(90deg, #d6dae3, #e5e8f3 40%, #e3e6ef 70%, #d9dcdf);
}

.taskbar button {
    width: 41px;
    margin-right: 8px;
    display: flex;
    align-items: center;
    justify-content: center;
    border-bottom: 2px solid transparent;
}

.taskbar button:first-child {
    width: 48px;
    margin-right: 6px;
}

.taskbar .run {
    border-color: #0078d7;
}

.taskbar .active {
    width: 45px;
    margin-left: -2px;
    background: #f8f9fc;
}

.taskbar button svg {
    width: 24px;
    height: 24px;
}

.glyph {
    font-family: "Liberation Sans", sans-serif;
    font-weight: bold;
}

.glyph.c {
    font-size: 10px;
    fill: #fff;
}

.glyph.z {
    font-size: 9px;
    fill: #0a68ff;
}

.tray {
    margin-left: auto;
    display: flex;
    align-items: center;
    gap: 8px;
    padding-right: 25px;
    font-family: Roboto, sans-serif;
    font-size: 11px;
}

.lang {
    margin-left: 5px;
}

.tray time {
    margin-left: 7px;
    line-height: 18px;
    text-align: center;
}

.note {
    margin-left: 10px;
}
```
